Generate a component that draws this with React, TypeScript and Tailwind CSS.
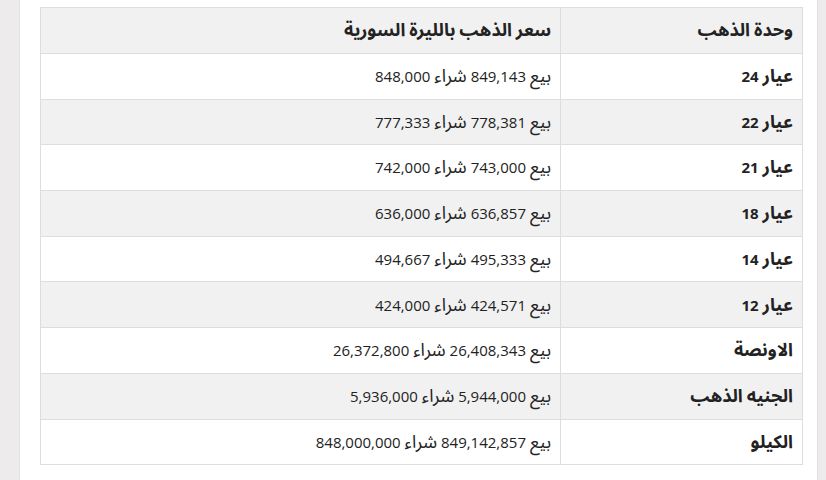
const rows: [string, string][] = [
  ['عيار 24', 'بيع 849,143 شراء 848,000'],
  ['عيار 22', 'بيع 778,381 شراء 777,333'],
  ['عيار 21', 'بيع 743,000 شراء 742,000'],
  ['عيار 18', 'بيع 636,857 شراء 636,000'],
  ['عيار 14', 'بيع 495,333 شراء 494,667'],
  ['عيار 12', 'بيع 424,571 شراء 424,000'],
  ['الاونصة', 'بيع 26,408,343 شراء 26,372,800'],
  ['الجنيه الذهب', 'بيع 5,944,000 شراء 5,936,000'],
  ['الكيلو', 'بيع 849,142,857 شراء 848,000,000'],
];

// Arabic words get a larger size so they match the digits' visual scale
function Mixed({ text }: { text: string }) {
  const parts = text.split(' ');
  return (
    <>
      {parts.map((p, i) => (
        <span key={i}>
          {/[\u0600-\u06FF]/.test(p) ? <span className="text-[18px] leading-[20px]">{p}</span> : p}
          {i < parts.length - 1 ? ' ' : ''}
        </span>
      ))}
    </>
  );
}

export default function App() {
  return (
    <div
      className="flex h-[480px] w-[826px] overflow-hidden bg-[#edebec] text-[15px] text-[#222]"
      style={{ fontFamily: '"Open Sans", "Noto Sans Arabic", "Noto Naskh Arabic", "DejaVu Sans", sans-serif' }}
    >
      <div className="w-[20px] shrink-0 border-r border-[#e2e0e1]" />
      <div className="w-[797px] shrink-0 bg-white pl-[20px] pt-[7px]">
        <table dir="rtl" className="w-[763px] border-collapse text-right">
          <thead>
            <tr className="h-[46px] bg-[#f1f1f1]">
              <th className="w-[242px] border border-[#dddddd] px-[9px] font-bold">
                <Mixed text="وحدة الذهب" />
              </th>
              <th className="border border-[#dddddd] px-[9px] font-bold">
                <Mixed text="سعر الذهب بالليرة السورية" />
              </th>
            </tr>
          </thead>
          <tbody>
            {rows.map(([unit, price], i) => (
              <tr key={unit} className={i % 2 === 1 ? 'h-[45.7px] bg-[#f1f1f1]' : 'h-[45.7px] bg-white'}>
                <td className="border border-[#dddddd] px-[9px] font-bold">
                  <Mixed text={unit} />
                </td>
                <td className="border border-[#dddddd] px-[9px]">
                  <Mixed text={price} />
                </td>
              </tr>
            ))}
          </tbody>
        </table>
      </div>
      <div className="flex-1 border-l border-[#e2e0e1]" />
    </div>
  );
}
